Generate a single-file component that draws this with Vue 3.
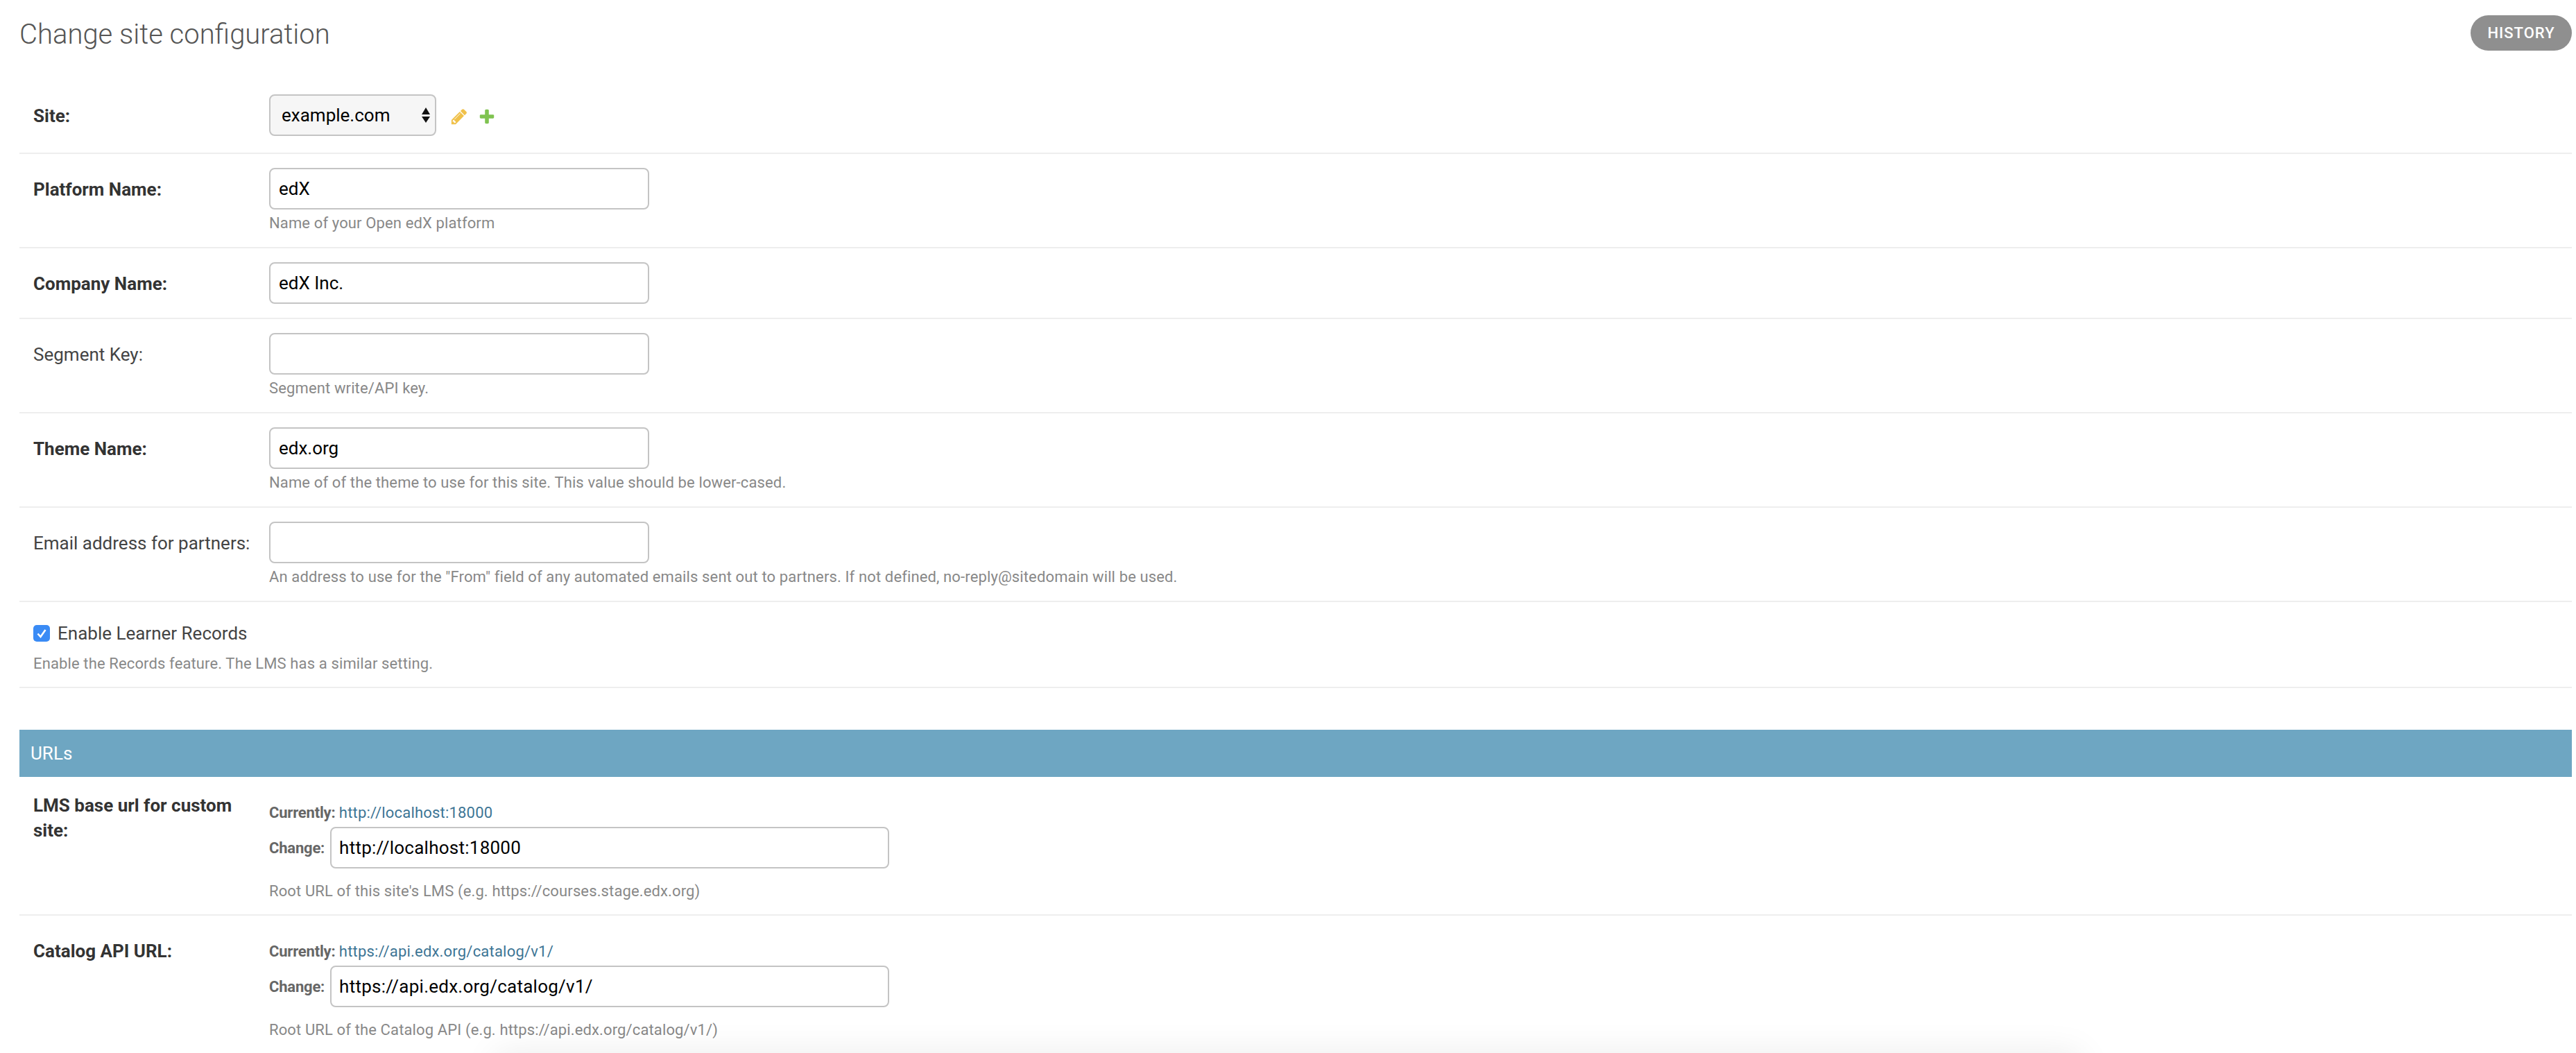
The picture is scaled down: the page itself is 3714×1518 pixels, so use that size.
<script setup>
const topRows = [
  { label: 'Platform Name:', req: true, value: 'edX', help: 'Name of your Open edX platform' },
  { label: 'Company Name:', req: true, value: 'edX Inc.' },
  { label: 'Segment Key:', value: '', help: 'Segment write/API key.' },
  { label: 'Theme Name:', req: true, value: 'edx.org', help: 'Name of of the theme to use for this site. This value should be lower-cased.' },
  { label: 'Email address for partners:', value: '', help: 'An address to use for the "From" field of any automated emails sent out to partners. If not defined, no-reply@sitedomain will be used.' },
]
const urlRows = [
  { label: 'LMS base url for custom site:', url: 'http://localhost:18000', help: "Root URL of this site's LMS (e.g. https://courses.stage.edx.org)", first: true },
  { label: 'Catalog API URL:', url: 'https://api.edx.org/catalog/v1/', help: 'Root URL of the Catalog API (e.g. https://api.edx.org/catalog/v1/)' },
]
</script>

<template>
  <div class="page">
    <header class="head">
      <h1 class="title">Change site configuration</h1>
      <a class="history">HISTORY</a>
    </header>

    <form class="form">
      <div class="row site-row">
        <label class="label req">Site:</label>
        <div class="site">
          <span class="select-wrap">
            <select class="select"><option>example.com</option></select>
            <svg class="arrows" viewBox="0 0 12 22" width="12" height="22">
              <path d="M6 0l6 10H0z" /><path d="M0 13h12l-6 9z" />
            </svg>
          </span>
          <svg class="icon first" viewBox="0 0 1792 1792" width="26" height="26">
            <path fill="#f0c14a" d="M491 1536l91-91-235-235-91 91v107h128v128h107zm523-928q0-22-22-22-10 0-17 7l-542 542q-7 7-7 17 0 22 22 22 10 0 17-7l542-542q7-7 7-17zm-54-192l416 416-832 832h-416v-416zm683 96q0 53-37 90l-166 166-416-416 166-165q36-38 90-38 53 0 91 38l235 234q37 39 37 91z" />
          </svg>
          <svg class="icon" viewBox="0 0 1792 1792" width="26" height="26">
            <path fill="#7fc350" d="M1600 796v192q0 40-28 68t-68 28h-416v416q0 40-28 68t-68 28h-192q-40 0-68-28t-28-68v-416h-416q-40 0-68-28t-28-68v-192q0-40 28-68t68-28h416v-416q0-40 28-68t68-28h192q40 0 68 28t28 68v416h416q40 0 68 28t28 68z" />
          </svg>
        </div>
      </div>

      <div v-for="r in topRows" :key="r.label" class="row">
        <label class="label" :class="{ req: r.req }">{{ r.label }}</label>
        <div class="field">
          <input class="input" type="text" :value="r.value" />
          <p v-if="r.help" class="help plain-help">{{ r.help }}</p>
        </div>
      </div>

      <div class="row check-row">
        <div class="check-line">
          <span class="check">
            <svg viewBox="0 0 24 24" width="24" height="24">
              <path d="M6.5 12.5l4 4.5 7-10" fill="none" stroke="#fff" stroke-width="2.6" />
            </svg>
          </span>
          <span class="check-label">Enable Learner Records</span>
        </div>
        <p class="help check-help">Enable the Records feature. The LMS has a similar setting.</p>
      </div>

      <h2 class="bar">URLs</h2>

      <div v-for="r in urlRows" :key="r.label" class="row url-row">
        <label class="label req" :class="{ shifted: r.first }">{{ r.label }}</label>
        <div class="field">
          <p class="current"><span class="tag">Currently:</span> <a class="link">{{ r.url }}</a></p>
          <div class="change">
            <span class="tag">Change:</span>
            <input class="input url-input" type="text" :value="r.url" />
          </div>
          <p class="help url-help">{{ r.help }}</p>
        </div>
      </div>
    </form>

    <div class="submit-shadow"></div>
  </div>
</template>

<style>
html, body { margin: 0; height: 100%; overflow: hidden; background: #fff; }
</style>

<style scoped>
.page {
  padding: 0 6px 0 28px;
  font-family: Roboto, "Liberation Sans", sans-serif;
  font-size: 26px;
  color: #333;
}
.head {
  height: 116px;
  display: flex;
  justify-content: space-between;
  align-items: flex-start;
}
.title {
  margin: 26px 0 0;
  font-size: 40px;
  line-height: 48px;
  font-weight: 300;
  color: #555;
}
.history {
  margin-top: 22px;
  width: 146px;
  height: 51px;
  border-radius: 26px;
  background: #8f8f8f;
  color: #fff;
  font-size: 22px;
  font-weight: 500;
  letter-spacing: 1px;
  display: flex;
  align-items: center;
  justify-content: center;
}
.row {
  display: flex;
  padding: 20px;
  border-bottom: 2px solid #eee;
}
.site-row { padding-bottom: 24px; }
.label {
  flex: none;
  width: 340px;
  box-sizing: border-box;
  padding-top: 13px;
  padding-right: 20px;
  line-height: 36px;
  color: #444;
}
.label.req { font-weight: 700; color: #333; }
.label.shifted { margin-top: -10px; }
.field { min-width: 0; }
.site { display: flex; align-items: center; }
.select-wrap { position: relative; display: block; height: 60px; }
.select {
  appearance: none;
  display: block;
  box-sizing: border-box;
  width: 241px;
  height: 60px;
  padding: 0 0 0 16px;
  border: 2px solid #c4c4c4;
  border-radius: 8px;
  background: #f6f6f6;
  font: 400 26px Roboto, sans-serif;
  color: #000;
}
.arrows { position: absolute; left: 220px; top: 19px; fill: #111; }
.icon { display: block; margin-left: 14px; margin-top: 3px; }
.icon.first { margin-left: 20px; }
.input {
  display: block;
  box-sizing: border-box;
  width: 548px;
  height: 60px;
  padding: 0 12px;
  border: 2px solid #c4c4c4;
  border-radius: 8px;
  background: #fff;
  font: 400 26px Roboto, sans-serif;
  color: #000;
  outline: none;
}
.help {
  margin: 2px 0 0;
  font-size: 22px;
  line-height: 36px;
  letter-spacing: 0.13px;
  color: #888;
}
.plain-help { margin-bottom: -4px; }
.check-row { display: block; padding: 27px 20px 15px; }
.check-line { display: flex; align-items: center; height: 36px; }
.check {
  width: 24px;
  height: 24px;
  border-radius: 5px;
  background: #3a8bf5;
  display: block;
  margin-right: 11px;
}
.check svg { display: block; }
.check-label { color: #444; }
.check-help { margin-top: 8px; }
.bar {
  margin: 60px 0 0;
  height: 68px;
  padding: 0 16px;
  background: #6ea6c2;
  color: #fff;
  font-size: 26px;
  font-weight: 400;
  line-height: 68px;
}
.current {
  margin: 14px 0 0;
  font-size: 22px;
  line-height: 36px;
  color: #666;
}
.tag { font-size: 22px; font-weight: 700; color: #666; letter-spacing: -0.2px; }
.link { color: #3d7595; letter-spacing: 0.2px; }
.change { display: flex; align-items: center; gap: 8px; margin-top: 2px; }
.url-input { width: 806px; padding-left: 11px; letter-spacing: 0.25px; }
.url-help { margin-top: 15px; }
.url-row { padding-bottom: 15px; }
.submit-shadow {
  position: fixed;
  left: 714px;
  width: 2286px;
  bottom: -60px;
  height: 60px;
  box-shadow: 0 0 50px rgba(0, 0, 0, 0.08);
}
</style>
